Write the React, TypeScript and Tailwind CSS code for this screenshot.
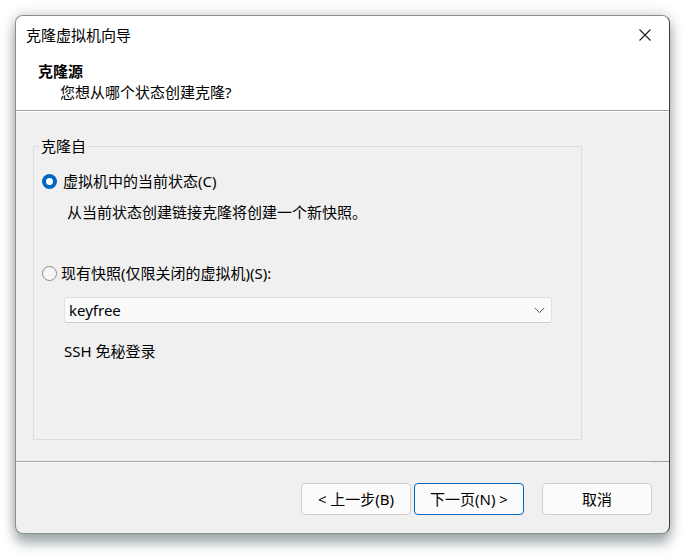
import React from 'react';

const font = { fontFamily: '"Noto Sans", "Noto Sans CJK SC", sans-serif' };

const Radio = ({ checked }: { checked: boolean }) =>
  checked ? (
    <span className="flex h-[15px] w-[15px] items-center justify-center rounded-full bg-[#0067c0]">
      <span className="h-[7px] w-[7px] rounded-full bg-white" />
    </span>
  ) : (
    <span className="h-[15px] w-[15px] rounded-full border border-[#8a8a8a] bg-[#f6f6f6]" />
  );

const Button = ({ label, primary }: { label: string; primary?: boolean }) => (
  <button
    type="button"
    className={
      primary
        ? 'flex h-[32px] w-[110px] items-center justify-center rounded-[4px] border border-[#0067c0] bg-[#fbfbfb] text-[15px] text-black'
        : 'flex h-[32px] w-[110px] items-center justify-center rounded-[4px] border border-[#d0d0d0] bg-[#fbfbfb] text-[15px] text-black'
    }
  >
    {label}
  </button>
);

export default function App() {
  return (
    <div className="h-[559px] w-[685px] bg-white pl-[15px] pt-[15px]" style={font}>
      <div className="flex h-[519px] w-[655px] flex-col overflow-hidden rounded-[8px] border border-[#8c8c8c] border-r-[#3c3c3c] bg-[#f0f0f0] leading-[20px] text-black shadow-[0_10px_12px_rgba(80,100,105,0.45),0_0_14px_rgba(0,0,0,0.22)]">
        {/* header */}
        <div className="flex h-[95px] flex-col border-b border-[#a0a0a0] bg-white">
          <div className="flex h-[37px] items-center justify-between pl-[10px] pr-[14px]">
            <span className="text-[15px]">克隆虚拟机向导</span>
            <svg width="14" height="14" viewBox="0 0 14 14" className="mr-[3px]">
              <path d="M1.5 1.5 L12.5 12.5 M12.5 1.5 L1.5 12.5" stroke="#1a1a1a" strokeWidth="1.1" fill="none" />
            </svg>
          </div>
          <div className="pl-[22px] pt-[8px] text-[15px] font-bold">克隆源</div>
          <div className="pl-[44px] pt-[1px] text-[15px]">您想从哪个状态创建克隆?</div>
        </div>
        {/* body */}
        <div className="flex h-[350px] flex-col border-t border-white pl-[17px] pt-[24px]">
          <fieldset className="h-[304px] w-[549px] border border-[#dcdcdc] pl-[8px] pr-[29px]">
            <legend className="ml-[-3px] px-[2px] text-[15px]">克隆自</legend>
            <label className="mt-[15px] flex items-center gap-[6px] text-[15px]">
              <Radio checked />
              <span>虚拟机中的当前状态(C)</span>
            </label>
            <div className="mt-[11px] pl-[25px] text-[15px]">从当前状态创建链接克隆将创建一个新快照。</div>
            <label className="mt-[41px] flex items-center gap-[4px] text-[15px]">
              <Radio checked={false} />
              <span>现有快照(仅限关闭的虚拟机)(S):</span>
            </label>
            <div className="ml-[22px] mt-[14px] flex h-[26px] items-center justify-between rounded-[2px] border border-[#e0e0e0] border-b-[#cfcfcf] bg-[#fafafa] pl-[4px] pr-[6px] text-[15px]">
              <span>keyfree</span>
              <svg width="11" height="7" viewBox="0 0 11 7">
                <path d="M0.8 1 L5.5 5.6 L10.2 1" stroke="#555" strokeWidth="1" fill="none" />
              </svg>
            </div>
            <div className="ml-[22px] mt-[18px] text-[15px]">SSH 免秘登录</div>
          </fieldset>
        </div>
        {/* footer */}
        <div className="flex flex-1 items-start justify-end border-t border-[#a0a0a0] pr-[17px]">
          <div className="flex w-full items-start justify-end border-t border-white pt-[20px]">
            <div className="flex gap-[3px]">
              <Button label="< 上一步(B)" />
              <Button label="下一页(N) >" primary />
            </div>
            <div className="ml-[18px]">
              <Button label="取消" />
            </div>
          </div>
        </div>
      </div>
    </div>
  );
}
